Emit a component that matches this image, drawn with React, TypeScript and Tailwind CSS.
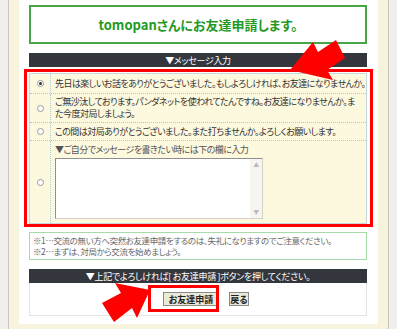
import React from "react";

const jp = "font-['Noto_Sans_CJK_JP',sans-serif]";

const rows = [
  {
    checked: true,
    h: "h-[20px]",
    lines: ["先日は楽しいお話をありがとうございました。もしよろしければ、お友達になりませんか。"],
  },
  {
    checked: false,
    h: "h-[29px]",
    lines: [
      "ご無沙汰しております。パンダネットを使われてたんですね。お友達になりませんか。ま",
      "た今度対局しましょう。",
    ],
  },
  {
    checked: false,
    h: "h-[18px]",
    lines: ["この間は対局ありがとうございました。また打ちませんか。よろしくお願いします。"],
  },
];

function Radio({ checked }: { checked?: boolean }) {
  return (
    <span className="flex h-[7px] w-[7px] items-center justify-center rounded-full border border-[#9a9a9a] bg-white">
      {checked && <span className="h-[3px] w-[3px] rounded-full bg-[#333]" />}
    </span>
  );
}

function DarkBar({ children }: { children: React.ReactNode }) {
  return (
    <div className="flex h-[14px] items-center justify-center bg-[#34363d] text-[9px] leading-none tracking-[-0.3px] text-white">
      {children}
    </div>
  );
}

export default function App() {
  return (
    <div
      className={`relative flex h-[329px] w-[397px] overflow-hidden bg-[#f1efeb] ${jp} [font-feature-settings:'palt']`}
    >
      <div className="w-[8px]" />
      <div className="w-px bg-[#c9c4bc]" />
      <div className="flex w-[379px] bg-[#f8f3dc] pl-[10px] pr-[9px]">
        <div className="flex h-[324px] w-[359px] flex-col bg-white pl-[10px] pr-[11px] pt-[5px]">
          {/* title */}
          <div className="flex h-[39px] items-center justify-center border-2 border-[#47a447] text-[13px] font-bold text-[#1f9a24]">
            tomopanさんにお友達申請します。
          </div>

          <div className="mt-[9px]">
            <DarkBar>▼メッセージ入力</DarkBar>
          </div>

          {/* message table */}
          <div className="mt-[6px] border border-[#c4d8de] bg-[#fdf9df] text-[9px] leading-[12px] tracking-[-0.55px] text-[#333]">
            {rows.map((r, i) => (
              <div
                key={i}
                className={`flex ${r.h} border-b border-dotted border-[#a9cbd9]`}
              >
                <div className="flex w-[21px] shrink-0 items-center justify-center border-r border-dotted border-[#a9cbd9]">
                  <Radio checked={r.checked} />
                </div>
                <div className="flex flex-col justify-center whitespace-nowrap pl-[4px]">
                  {r.lines.map((l) => (
                    <span key={l}>{l}</span>
                  ))}
                </div>
              </div>
            ))}
            <div className="flex h-[82px]">
              <div className="flex w-[21px] shrink-0 items-center justify-center border-r border-dotted border-[#a9cbd9]">
                <Radio />
              </div>
              <div className="flex flex-col pl-[4px] pt-[3px]">
                <span className="text-[#555]">▼ご自分でメッセージを書きたい時には下の欄に入力</span>
                <div className="mt-[2px] flex h-[61px] w-[208px] border border-[#8f8f8f] border-r-[#d4d0c8] border-b-[#d4d0c8] bg-white">
                  <div className="flex-1" />
                  <div className="flex w-[12px] flex-col justify-between bg-[#f6f5f2]">
                    <span className="flex h-[12px] items-center justify-center text-[6px] text-[#bbb]">▲</span>
                    <span className="flex h-[12px] items-center justify-center text-[6px] text-[#bbb]">▼</span>
                  </div>
                </div>
              </div>
            </div>
          </div>

          {/* notes */}
          <div className="mt-[8px] flex h-[28px] flex-col justify-center border border-[#a7dba7] pl-[3px] text-[8.5px] leading-[11px] tracking-[-0.4px] text-[#666]">
            <span className="whitespace-nowrap">※1…交流の無い方へ突然お友達申請をするのは、失礼になりますのでご注意ください。</span>
            <span className="whitespace-nowrap">※2…まずは、対局から交流を始めましょう。</span>
          </div>

          <div className="mt-[9px]">
            <DarkBar>▼上記でよろしければ[ お友達申請 ]ボタンを押してください。</DarkBar>
          </div>

          <div className="flex h-[33px] items-center justify-center gap-[10px] border border-t-0 border-[#e4e4e4] pl-[16px]">
            <button className="h-[14px] w-[56px] border border-[#8a8a8a] bg-[#ece9d8] text-[9px] font-bold leading-none text-[#222]">
              お友達申請
            </button>
            <button className="h-[14px] w-[20px] border border-[#8a8a8a] bg-[#ece9d8] text-[9px] font-bold leading-none text-[#222]">
              戻る
            </button>
          </div>
        </div>
      </div>
      <div className="w-px bg-[#c9c4bc]" />

      {/* red annotations */}
      <div className="pointer-events-none absolute left-[24px] top-[69px] h-[158px] w-[349px] border-[3px] border-[#f00]" />
      <div className="pointer-events-none absolute left-[148px] top-[285px] h-[27px] w-[71px] border-[3px] border-[#f00]" />
      <svg className="pointer-events-none absolute left-0 top-0" width="397" height="329">
        <polygon
          fill="#f00"
          points="290,70 313,42 318,52 336,40 345,58 327,70 333,80"
        />
        <polygon
          fill="#f00"
          points="150,290 137,318 132,308 114,322 102,303 121,293 115,283"
        />
      </svg>
    </div>
  );
}
